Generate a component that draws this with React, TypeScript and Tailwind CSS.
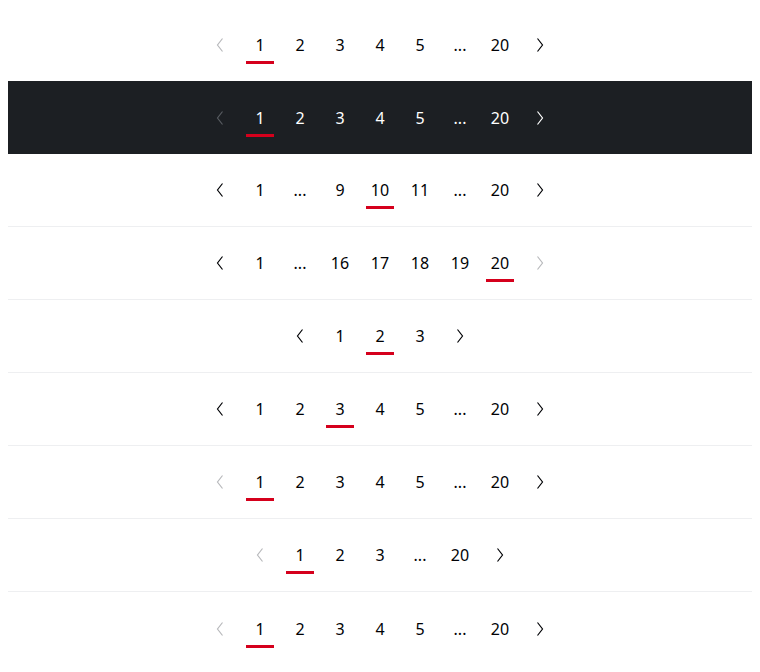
type Item = number | '...'

interface RowProps {
  items: Item[]
  active: number
  prevDisabled?: boolean
  nextDisabled?: boolean
  dark?: boolean
  border?: boolean
}

function Chevron({ dir, disabled, dark }: { dir: 'left' | 'right'; disabled?: boolean; dark?: boolean }) {
  const color = disabled ? (dark ? 'text-[#585c61]' : 'text-[#b8b9bc]') : dark ? 'text-white' : 'text-[#010205]'
  return (
    <span className={`flex w-10 h-10 items-center justify-center ${color}`}>
      <svg width="10" height="16" viewBox="0 0 10 16" fill="none">
        {dir === 'left' ? (
          <path d="M7.5 1.5 L2.5 8 L7.5 14.5" stroke="currentColor" strokeWidth="1.2" />
        ) : (
          <path d="M2.5 1.5 L7.5 8 L2.5 14.5" stroke="currentColor" strokeWidth="1.2" />
        )}
      </svg>
    </span>
  )
}

function PaginationRow({ items, active, prevDisabled, nextDisabled, dark, border = true }: RowProps) {
  return (
    <div
      className={`flex h-[73px] items-center justify-center ${
        dark ? 'bg-[#1c1f23] text-white' : 'bg-white text-[#010205]'
      } ${border ? 'border-b border-[#eeeff1]' : ''}`}
    >
      <div className="flex items-center">
        <Chevron dir="left" disabled={prevDisabled} dark={dark} />
        {items.map((it, i) => (
          <span key={i} className="relative flex w-10 h-10 items-center justify-center text-base leading-none">
            {it}
            {it === active && (
              <span className="absolute left-1.5 right-1.5 top-9 h-[3px] bg-[#d5001c]" />
            )}
          </span>
        ))}
        <Chevron dir="right" disabled={nextDisabled} dark={dark} />
      </div>
    </div>
  )
}

export default function App() {
  return (
    <div className="min-h-screen bg-white px-2 py-2" style={{ fontFamily: '"Noto Sans", Inter, sans-serif' }}>
      <PaginationRow items={[1, 2, 3, 4, 5, '...', 20]} active={1} prevDisabled border={false} />
      <PaginationRow items={[1, 2, 3, 4, 5, '...', 20]} active={1} prevDisabled dark border={false} />
      <PaginationRow items={[1, '...', 9, 10, 11, '...', 20]} active={10} />
      <PaginationRow items={[1, '...', 16, 17, 18, 19, 20]} active={20} nextDisabled />
      <PaginationRow items={[1, 2, 3]} active={2} />
      <PaginationRow items={[1, 2, 3, 4, 5, '...', 20]} active={3} />
      <PaginationRow items={[1, 2, 3, 4, 5, '...', 20]} active={1} prevDisabled />
      <PaginationRow items={[1, 2, 3, '...', 20]} active={1} prevDisabled />
      <PaginationRow items={[1, 2, 3, 4, 5, '...', 20]} active={1} prevDisabled border={false} />
    </div>
  )
}
